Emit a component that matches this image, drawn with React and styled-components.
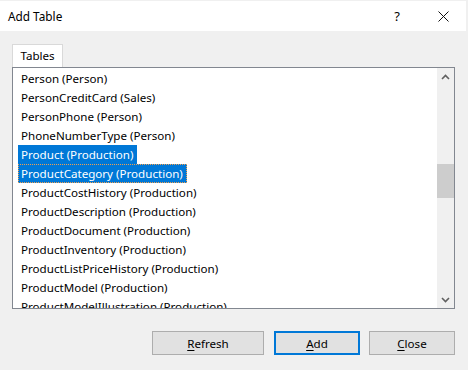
import React from 'react';
import styled, { createGlobalStyle } from 'styled-components';

const tables = [
  'Person (Person)',
  'PersonCreditCard (Sales)',
  'PersonPhone (Person)',
  'PhoneNumberType (Person)',
  'Product (Production)',
  'ProductCategory (Production)',
  'ProductCostHistory (Production)',
  'ProductDescription (Production)',
  'ProductDocument (Production)',
  'ProductInventory (Production)',
  'ProductListPriceHistory (Production)',
  'ProductModel (Production)',
  'ProductModelIllustration (Production)',
];

const selected = [4, 5];
const focused = 5;

const App = () => {
  return (
    <Window>
      <GlobalStyle />
      <TitleBar>
        <Title>Add Table</Title>
        <CaptionButton>?</CaptionButton>
        <CaptionButton>
          <svg width="11" height="11" viewBox="0 0 11 11">
            <path d="M0.5 0.5 L10.5 10.5 M10.5 0.5 L0.5 10.5" stroke="#111" strokeWidth="1" />
          </svg>
        </CaptionButton>
      </TitleBar>
      <Body>
        <TabStrip>
          <Tab>Tables</Tab>
        </TabStrip>
        <ListBox>
          <Items>
            {tables.map((name, i) => (
              <Item key={name}>
                <ItemLabel $selected={selected.includes(i)} $focused={i === focused}>
                  {name}
                </ItemLabel>
              </Item>
            ))}
          </Items>
          <ScrollBar>
            <ArrowButton>
              <svg width="9" height="6" viewBox="0 0 9 6">
                <path d="M1 5 L4.5 1.5 L8 5" stroke="#606060" strokeWidth="1.6" fill="none" />
              </svg>
            </ArrowButton>
            <Track>
              <Thumb />
            </Track>
            <ArrowButton>
              <svg width="9" height="6" viewBox="0 0 9 6">
                <path d="M1 1 L4.5 4.5 L8 1" stroke="#606060" strokeWidth="1.6" fill="none" />
              </svg>
            </ArrowButton>
          </ScrollBar>
        </ListBox>
        <ButtonRow>
          <Button $wide>
            <u>R</u>efresh
          </Button>
          <Button $default>
            <u>A</u>dd
          </Button>
          <Button>
            <u>C</u>lose
          </Button>
        </ButtonRow>
      </Body>
    </Window>
  );
};

const GlobalStyle = createGlobalStyle`
  html, body {
    margin: 0;
    padding: 0;
    background: #f0f0f0;
  }
  body {
    font-family: "Noto Sans", "Open Sans", sans-serif;
    font-size: 11.6px;
    color: #000;
  }
`;

const Window = styled.div`
  width: 468px;
  height: 370px;
  background: #f0f0f0;
  padding-top: 1px;
  box-sizing: border-box;
  display: flex;
  flex-direction: column;
`;

const TitleBar = styled.div`
  height: 30px;
  margin-right: 2px;
  background: #ffffff;
  display: flex;
  align-items: center;
`;

const Title = styled.div`
  flex: 1;
  padding-left: 8px;
  font-size: 11.8px;
`;

const CaptionButton = styled.div`
  width: 46px;
  height: 30px;
  display: flex;
  align-items: center;
  justify-content: center;
  font-size: 13px;

  svg {
    display: block;
  }
`;

const Body = styled.div`
  flex: 1;
  padding: 13px 13px 0 12px;
  display: flex;
  flex-direction: column;
`;

const TabStrip = styled.div`
  display: flex;
  height: 23px;
`;

const Tab = styled.div`
  width: 51px;
  box-sizing: border-box;
  border: 1px solid #d9d9d9;
  border-bottom: none;
  background: #ffffff;
  display: flex;
  align-items: center;
  justify-content: center;
  padding-bottom: 1px;
`;

const ListBox = styled.div`
  height: 242px;
  box-sizing: border-box;
  border: 1px solid #828790;
  background: #ffffff;
  display: flex;
  overflow: hidden;
`;

const Items = styled.div`
  flex: 1;
  padding: 1px 0 0 5px;
  overflow: hidden;
`;

const Item = styled.div`
  height: 19px;
  display: flex;
`;

const ItemLabel = styled.span`
  box-sizing: border-box;
  height: 19px;
  line-height: 18px;
  padding: 0 3px 0 2px;
  white-space: nowrap;
  border: 1px solid transparent;
  background: ${(p) => (p.$selected ? '#0078d7' : 'transparent')};
  color: ${(p) => (p.$selected ? '#ffffff' : '#000000')};
  border-color: ${(p) => (p.$focused ? '#f0a050' : 'transparent')};
  border-style: ${(p) => (p.$focused ? 'dotted' : 'solid')};
`;

const ScrollBar = styled.div`
  width: 17px;
  background: #f0f0f0;
  display: flex;
  flex-direction: column;
`;

const ArrowButton = styled.div`
  height: 17px;
  display: flex;
  align-items: center;
  justify-content: center;

  svg {
    display: block;
  }
`;

const Track = styled.div`
  flex: 1;
  padding-top: 79px;
`;

const Thumb = styled.div`
  height: 34px;
  background: #cdcdcd;
`;

const ButtonRow = styled.div`
  display: flex;
  justify-content: flex-end;
  margin-top: 22px;
`;

const Button = styled.div`
  width: ${(p) => (p.$wide ? '112px' : '86px')};
  height: 24px;
  box-sizing: border-box;
  background: #e1e1e1;
  border: ${(p) => (p.$default ? '2px solid #0078d7' : '1px solid #adadad')};
  display: flex;
  align-items: center;
  justify-content: center;
  margin-left: ${(p) => (p.$wide ? '0' : p.$default ? '10px' : '9px')};

  u {
    text-decoration-thickness: 1px;
    text-underline-offset: 2px;
  }
`;

export default App;
